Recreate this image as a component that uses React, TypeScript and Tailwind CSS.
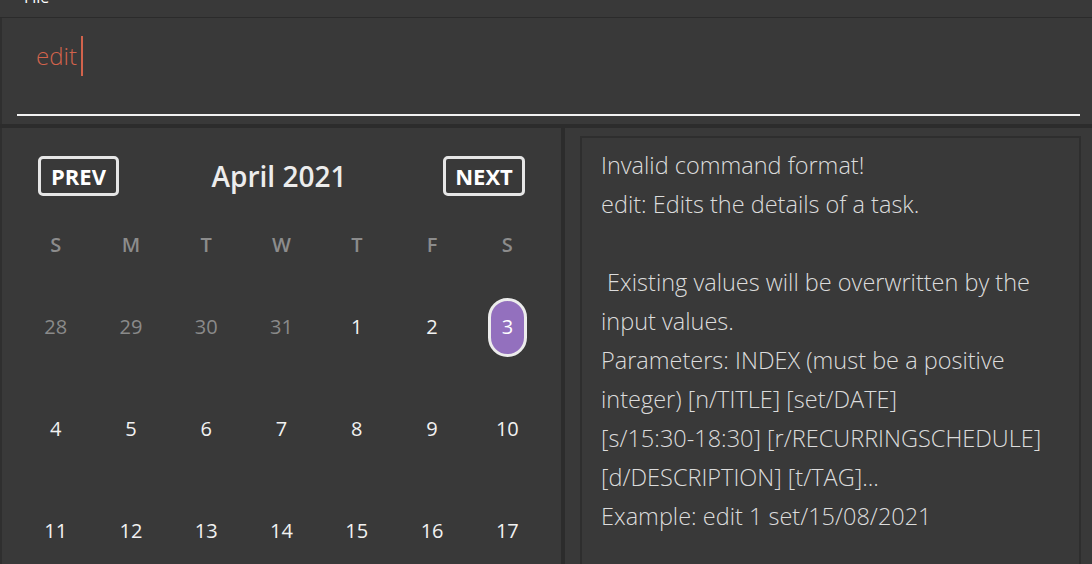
import React from 'react';

const days = [
  { d: '28', muted: true },
  { d: '29', muted: true },
  { d: '30', muted: true },
  { d: '31', muted: true },
  { d: '1' },
  { d: '2' },
  { d: '3', today: true },
  { d: '4' },
  { d: '5' },
  { d: '6' },
  { d: '7' },
  { d: '8' },
  { d: '9' },
  { d: '10' },
  { d: '11' },
  { d: '12' },
  { d: '13' },
  { d: '14' },
  { d: '15' },
  { d: '16' },
  { d: '17' },
];

const weekdays = ['S', 'M', 'T', 'W', 'T', 'F', 'S'];

const resultLines = [
  'Invalid command format!',
  'edit: Edits the details of a task.',
  '',
  '\u00a0Existing values will be overwritten by the',
  'input values.',
  'Parameters: INDEX (must be a positive',
  'integer) [n/TITLE] [set/DATE]',
  '[s/15:30-18:30] [r/RECURRINGSCHEDULE]',
  '[d/DESCRIPTION] [t/TAG]...',
  'Example: edit 1 set/15/08/2021',
];

export default function App() {
  return (
    <div
      className="w-[1092px] h-[564px] overflow-hidden flex flex-col bg-[#393939]"
      style={{ fontFamily: '"Open Sans", "Noto Sans", sans-serif' }}
    >
      {/* menu bar */}
      <div className="h-[18px] overflow-hidden border-b border-[#2b2b2b] px-[24px]">
        <span className="block -mt-[15px] text-[16px] text-white">File</span>
      </div>

      {/* command box */}
      <div className="h-[106px] border-l-2 border-[#2f2f2f] pl-[15px] pr-[12px] pt-[22px]">
        <div className="h-[76px] border-b-2 border-[#f2f2f2] flex items-start pl-[19px]">
          <span className="text-[24px] leading-[32px] font-light text-[#d2634c]">edit</span>
          <span className="ml-[4px] w-[2px] h-[40px] -mt-[4px] bg-[#d2634c]" />
        </div>
      </div>

      <div className="h-[4px] bg-[#2c2c2c]" />

      {/* lower panels */}
      <div className="flex flex-1 min-h-0">
        {/* calendar */}
        <div className="w-[561px] border-l-2 border-[#2f2f2f] pt-[28px] px-[16px]">
          <div className="h-[40px] flex items-center justify-between px-[20px]">
            <button className="w-[81px] h-[40px] rounded-[5px] border-[3px] border-[#e6e6e6] text-white text-[22px] font-bold leading-none">
              PREV
            </button>
            <span className="text-[28px] leading-[40px] font-semibold text-[#ececec] -ml-[4px]">April 2021</span>
            <button className="w-[82px] h-[40px] rounded-[5px] border-[3px] border-[#e6e6e6] text-white text-[22px] font-bold leading-none">
              NEXT
            </button>
          </div>
          <div className="grid grid-cols-7 mt-[30px]">
            {weekdays.map((w, i) => (
              <div key={i} className="h-[38px] flex items-center justify-center text-[20px] font-semibold text-[#8c8c8c]">
                {w}
              </div>
            ))}
          </div>
          <div className="grid grid-cols-7 mt-[34px] gap-y-[44px]">
            {days.map((day) => (
              <div key={day.d} className="h-[58px] flex items-center justify-center">
                {day.today ? (
                  <span className="w-[39px] h-[59px] rounded-full bg-[#9370be] border-[3px] border-[#ececec] flex items-center justify-center text-[20px] text-white">
                    {day.d}
                  </span>
                ) : (
                  <span
                    className={
                      day.muted
                        ? 'text-[20px] text-[#8a8a8a]'
                        : 'text-[20px] font-medium text-[#f2f2f2]'
                    }
                  >
                    {day.d}
                  </span>
                )}
              </div>
            ))}
          </div>
        </div>

        <div className="w-[4px] bg-[#2c2c2c]" />

        {/* result display */}
        <div className="flex-1 pt-[8px] pl-[15px] pr-[11px]">
          <div className="h-full border-2 border-b-0 border-[#2e2e2e] pl-[19px] pt-[8px]">
            {resultLines.map((line, i) => (
              <div key={i} className="h-[39px] leading-[39px] text-[23.5px] font-light text-[#dcdcdc] whitespace-pre">
                {line}
              </div>
            ))}
          </div>
        </div>
      </div>
    </div>
  );
}
